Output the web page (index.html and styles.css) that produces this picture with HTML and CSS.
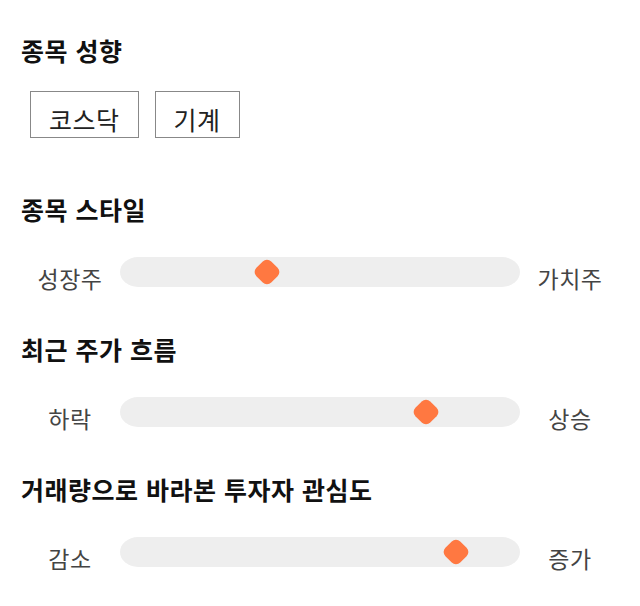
FILE: index.html
```html
<!DOCTYPE html>
<html lang="ko">
<head>
    <meta charset="UTF-8">
    <meta name="viewport" content="width=device-width, initial-scale=1.0">
    <title>종목 성향</title>
    <link rel="stylesheet" href="styles.css">
</head>
<body>
    <section class="block">
        <h2 class="section-title">종목 성향</h2>
        <div class="tags">
            <span class="tag">코스닥</span>
            <span class="tag">기계</span>
        </div>
    </section>

    <section class="block">
        <h2 class="section-title">종목 스타일</h2>
        <div class="scale">
            <span class="scale-label">성장주</span>
            <div class="track"><span class="thumb" style="left: 36.75%"></span></div>
            <span class="scale-label">가치주</span>
        </div>
    </section>

    <section class="block">
        <h2 class="section-title">최근 주가 흐름</h2>
        <div class="scale">
            <span class="scale-label">하락</span>
            <div class="track"><span class="thumb" style="left: 76.5%"></span></div>
            <span class="scale-label">상승</span>
        </div>
    </section>

    <section class="block">
        <h2 class="section-title">거래량으로 바라본 투자자 관심도</h2>
        <div class="scale">
            <span class="scale-label">감소</span>
            <div class="track"><span class="thumb" style="left: 84%"></span></div>
            <span class="scale-label">증가</span>
        </div>
    </section>
</body>
</html>
```

FILE: styles.css
```css
body {
    font-family: "Noto Sans CJK KR", "Noto Sans", sans-serif;
    margin: 0;
    padding: 35px 20px 20px;
    color: #111;
    background: #fff;
}
.block {
    margin-bottom: 47px;
}
.section-title {
    font-size: 25px;
    font-weight: bold;
    letter-spacing: 0.5px;
    line-height: 30px;
    margin: 0 0 33px 1px;
}
.block:first-child .section-title {
    margin-bottom: 26px;
}
.block:first-child {
    margin-bottom: 56px;
}
.tags {
    display: flex;
    gap: 16px;
    padding-left: 10px;
}
.tag {
    border: 1px solid #888;
    padding: 0 18px;
    height: 45px;
    line-height: 55px;
    font-size: 25px;
    letter-spacing: 0.5px;
    color: #222;
}
.scale {
    display: grid;
    grid-template-columns: 100px 400px 100px;
    align-items: start;
    height: 30px;
}
/* labels sit a little below the track's middle */
.scale-label {
    text-align: center;
    font-size: 23px;
    letter-spacing: 0.5px;
    line-height: 42px;
    height: 30px;
    color: #444;
}
.track {
    position: relative;
    height: 30px;
    background: #eee;
    border-radius: 18px / 15px;
}
.thumb {
    position: absolute;
    top: 50%;
    width: 21px;
    height: 21px;
    background: #ff7841;
    border-radius: 6px;
    transform: translate(-50%, -50%) rotate(45deg);
}
```
